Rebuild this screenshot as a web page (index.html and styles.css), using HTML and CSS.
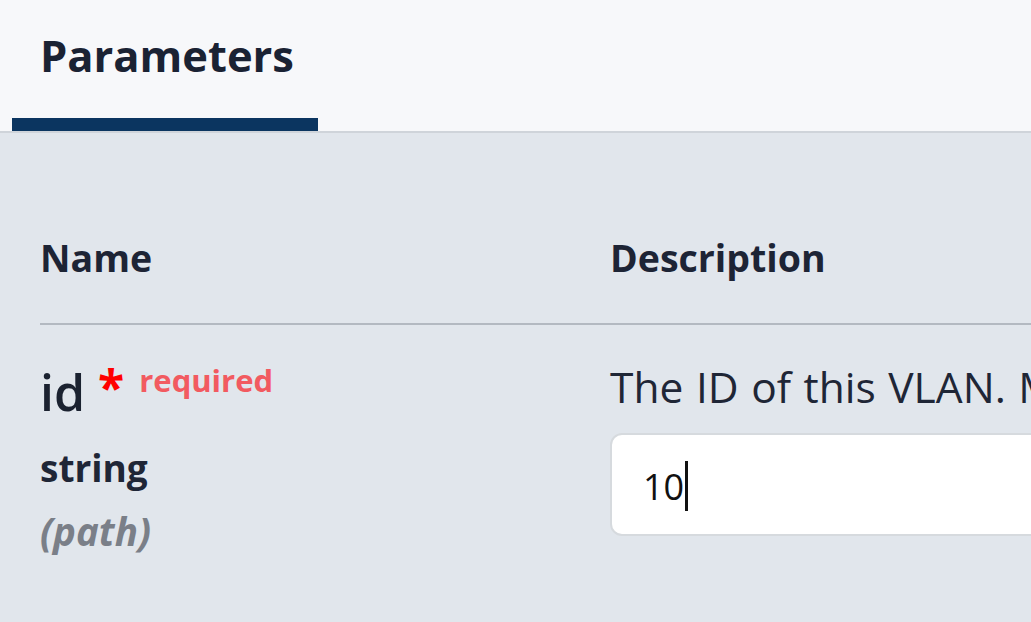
FILE: index.html
```html
<!DOCTYPE html>
<html>
<head>
<meta charset="utf-8">
<link rel="stylesheet" href="styles.css">
</head>
<body>
<div class="tab-header">
  <div class="tab">Parameters</div>
</div>
<div class="section">
  <div class="table">
    <div class="th th-name">Name</div>
    <div class="th th-desc">Description</div>
    <div class="rule"></div>
    <div class="cell-name">
      <div class="pname"><span class="pid">id</span><span class="star">*</span><span class="req">required</span></div>
      <div class="ptype">string</div>
      <div class="pin">(path)</div>
    </div>
    <div class="cell-desc">
      <div class="desc">The ID of this VLAN. Must be unique within the network.</div>
      <div class="input"><span class="val">10</span><span class="caret"></span></div>
    </div>
  </div>
</div>
</body>
</html>
```
FILE: styles.css
```css
html, body {
  margin: 0;
  padding: 0;
  overflow: hidden;
  width: 1031px;
  height: 622px;
  background: #e1e6ec;
  font-family: "Open Sans", "Noto Sans", sans-serif;
  color: #1f2636;
}
.tab-header {
  height: 131px;
  background: #f7f8fa;
  padding-left: 12px;
  display: flex;
  align-items: flex-end;
  border-bottom: 2px solid #cfd4da;
}
.tab {
  width: 278px;
  padding: 31px 0 37px 28px;
  font-size: 43.5px;
  line-height: 50px;
  font-weight: 700;
  color: #1a2233;
  border-bottom: 13px solid #0b3560;
}
.section {
  padding-left: 40px;
  overflow: hidden;
}
.table {
  display: grid;
  grid-template-columns: 570px 1fr;
}
.th {
  padding: 101px 0 41px;
  font-size: 37.5px;
  line-height: 48px;
  font-weight: 700;
  color: #1d2435;
}
.rule {
  grid-column: 1 / 3;
  height: 2px;
  background: #b3b9c1;
}
.cell-name {
  padding-top: 38px;
}
.pname {
  display: flex;
  align-items: flex-start;
  height: 58px;
}
.pid {
  font-size: 50px;
  line-height: 58px;
  font-weight: 600;
  color: #1b2230;
}
.star {
  color: #ff0000;
  font-size: 48px;
  font-weight: 700;
  line-height: 44px;
  margin-left: 13px;
  margin-top: 2px;
}
.req {
  color: #f25a60;
  font-size: 31px;
  font-weight: 700;
  line-height: 34px;
  margin-left: 15px;
  margin-top: 0px;
}
.ptype {
  font-size: 37px;
  font-weight: 700;
  line-height: 48px;
  margin-top: 23px;
  color: #1f2636;
}
.pin {
  font-size: 38.5px;
  font-weight: 700;
  font-style: italic;
  line-height: 56px;
  margin-top: 11px;
  padding-right: 8px;
  color: #7a7f88;
}
.cell-desc {
  padding-top: 33px;
}
.desc {
  font-size: 42.5px;
  line-height: 58px;
  word-spacing: 1.5px;
  white-space: nowrap;
  color: #1f2636;
}
.input {
  margin-top: 17px;
  height: 99px;
  background: #ffffff;
  border: 2px solid #d6dade;
  border-radius: 12px;
  padding-left: 31px;
  display: flex;
  align-items: center;
  width: 600px;
}
.val {
  font-size: 36px;
  line-height: 48px;
  color: #111;
  margin-top: 4px;
}
.caret {
  display: block;
  width: 3px;
  height: 50px;
  background: #111;
  margin-left: 1px;
  margin-top: 2px;
}
```
